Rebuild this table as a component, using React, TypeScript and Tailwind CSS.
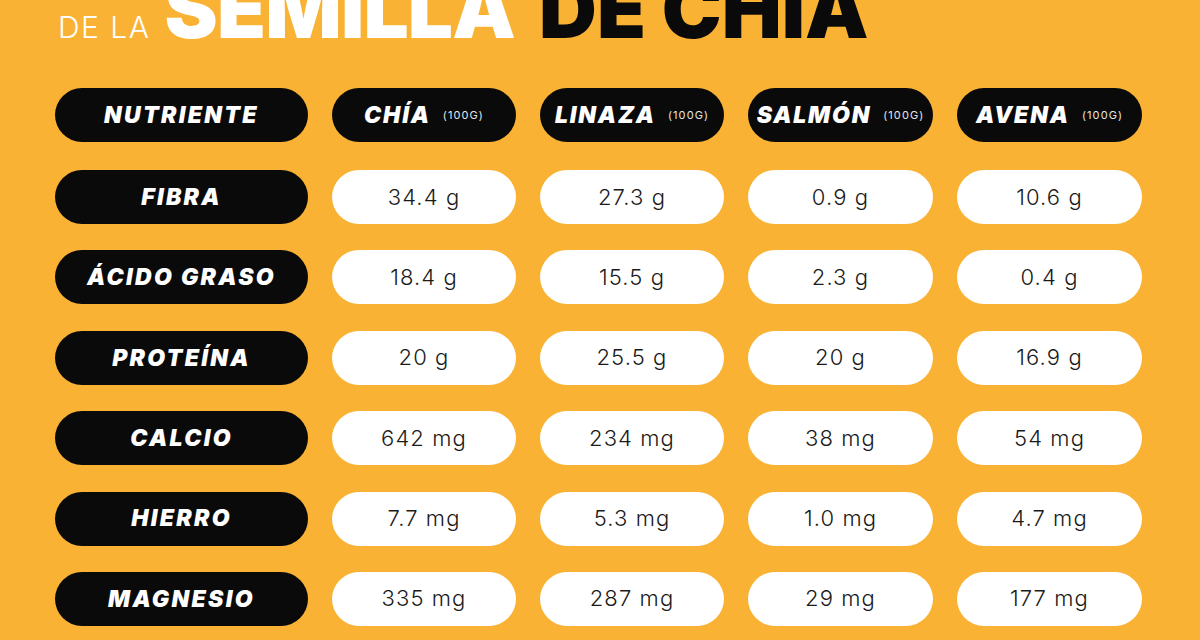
const columns = ['CHÍA', 'LINAZA', 'SALMÓN', 'AVENA'];

const rows = [
  { name: 'FIBRA', values: ['34.4 g', '27.3 g', '0.9 g', '10.6 g'] },
  { name: 'ÁCIDO GRASO', values: ['18.4 g', '15.5 g', '2.3 g', '0.4 g'] },
  { name: 'PROTEÍNA', values: ['20 g', '25.5 g', '20 g', '16.9 g'] },
  { name: 'CALCIO', values: ['642 mg', '234 mg', '38 mg', '54 mg'] },
  { name: 'HIERRO', values: ['7.7 mg', '5.3 mg', '1.0 mg', '4.7 mg'] },
  { name: 'MAGNESIO', values: ['335 mg', '287 mg', '29 mg', '177 mg'] },
];

const labelPill =
  'h-[54px] rounded-full bg-[#0a0a0a] text-white flex items-center justify-center italic font-black text-[23px] tracking-[0.1em]';
const valuePill =
  'h-[54px] rounded-full bg-white text-[#1a1a1a] flex items-center justify-center font-light text-[22px] tracking-[0.05em]';

export default function App() {
  return (
    <div
      className="w-[1200px] h-[640px] overflow-hidden bg-[#F9B233]"
      style={{ fontFamily: 'Inter, "Liberation Sans", sans-serif' }}
    >
      {/* title, cut off at the top like the original graphic */}
      <div className="flex items-baseline pl-[58px] -mt-[31px] h-[80px]">
        <span className="text-white font-light text-[30px] tracking-[0.05em] leading-none">DE LA</span>
        <span className="ml-[14px] text-white font-black text-[80px] tracking-[-0.01em] leading-none">SEMILLA</span>
        <span className="ml-[24px] text-[#0a0a0a] font-black text-[80px] leading-none">DE CHIA</span>
      </div>

      <div className="ml-[55px] mt-[39px] grid grid-cols-[253px_184px_184px_185px_185px] gap-x-[24px]">
        <div className={labelPill}>NUTRIENTE</div>
        {columns.map((c) => (
          <div key={c} className={labelPill + ' gap-[12px] tracking-[0.08em]'}>
            <span>{c}</span>
            <span className="not-italic font-normal text-[11px] tracking-[0.1em] text-[#e5e5e5]">(100G)</span>
          </div>
        ))}
      </div>

      <div className="ml-[55px] mt-[28px] grid grid-cols-[253px_184px_184px_185px_185px] gap-x-[24px] gap-y-[26.4px]">
        {rows.map((r) => (
          <>
            <div key={r.name} className={labelPill}>{r.name}</div>
            {r.values.map((v, i) => (
              <div key={r.name + i} className={valuePill}>{v}</div>
            ))}
          </>
        ))}
      </div>
    </div>
  );
}
